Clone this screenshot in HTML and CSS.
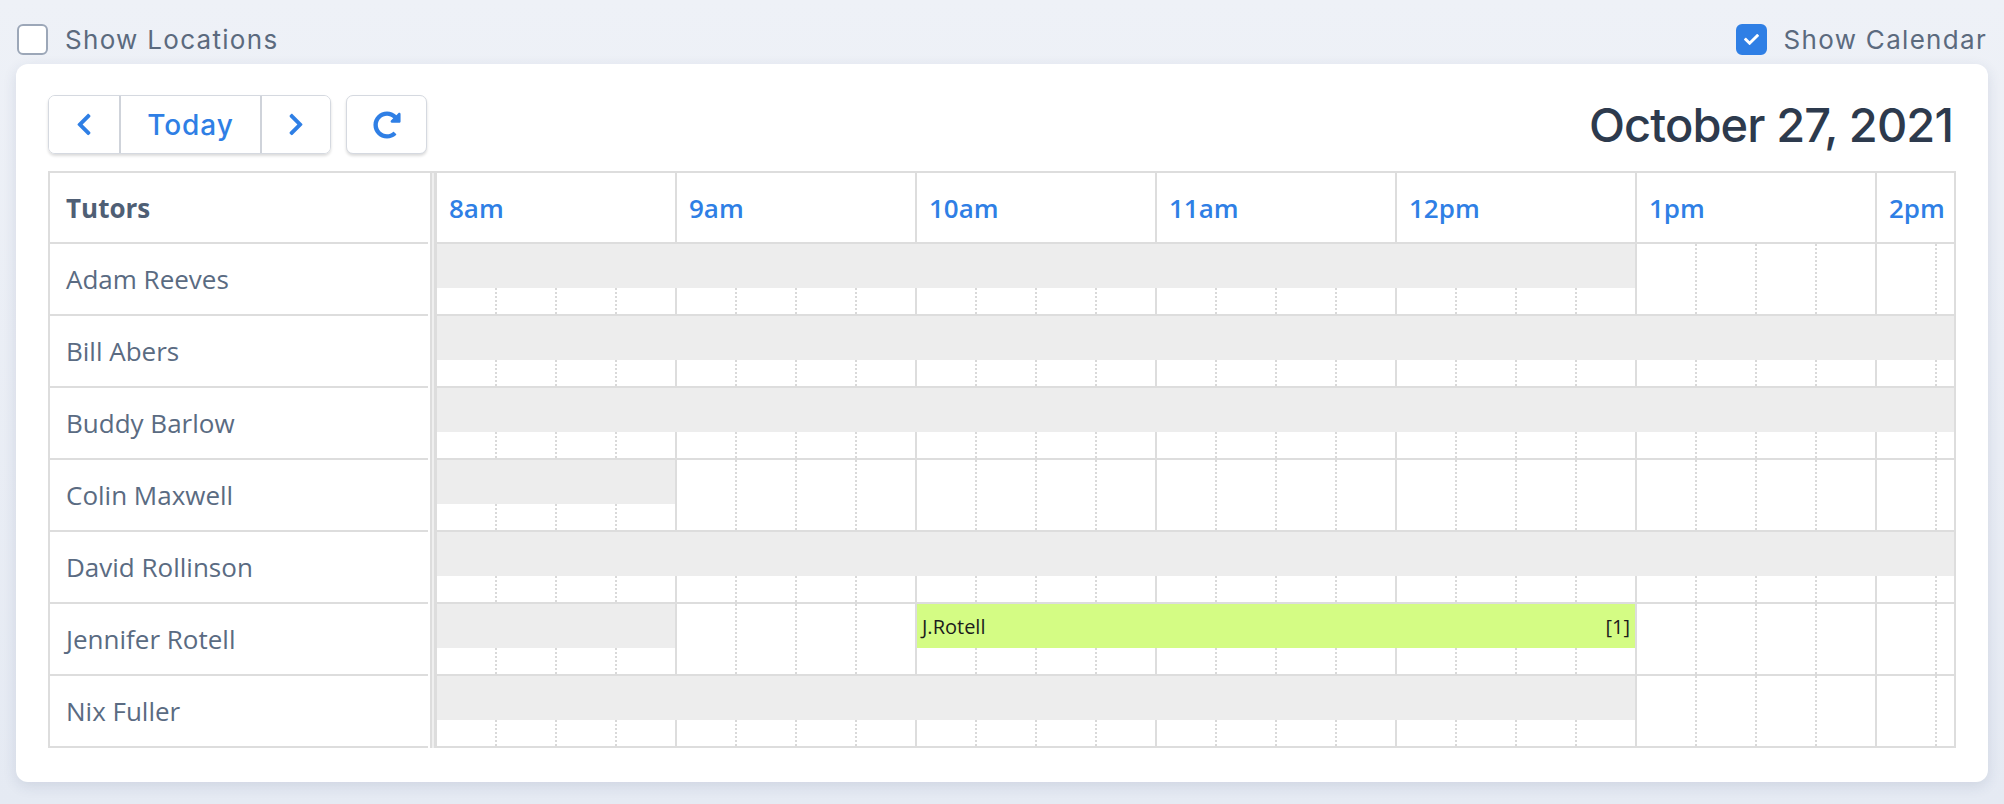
FILE: index.html
```html
<!DOCTYPE html>
<html lang="en">
<head>
    <meta charset="UTF-8">
    <meta name="viewport" content="width=device-width, initial-scale=1.0">
    <title>Tutor Schedule</title>
    <link rel="stylesheet" href="styles.css">
</head>
<body>
    <div class="topbar">
        <label class="toggle">
            <span class="box"></span>
            Show Locations
        </label>
        <label class="toggle">
            <span class="box checked">
                <svg viewBox="0 0 512 512"><path d="M173.9 439.4l-166.4-166.4c-10-10-10-26.2 0-36.2l36.2-36.2c10-10 26.2-10 36.2 0L192 312.7 432.1 72.6c10-10 26.2-10 36.2 0l36.2 36.2c10 10 10 26.2 0 36.2l-294.4 294.4c-10 10-26.2 10-36.2 0z"/></svg>
            </span>
            Show Calendar
        </label>
    </div>

    <div class="card">
        <div class="toolbar">
            <div class="btn-group">
                <button class="btn btn-icon" title="Previous day">
                    <svg class="chevron" viewBox="0 0 320 512"><path d="M34.5 239L228.9 44.7c9.4-9.4 24.6-9.4 33.9 0l22.7 22.7c9.4 9.4 9.4 24.5 0 33.9L131.5 256l154 154.8c9.3 9.4 9.3 24.5 0 33.9l-22.7 22.7c-9.4 9.4-24.6 9.4-33.9 0L34.5 273c-9.4-9.4-9.4-24.6 0-34z"/></svg>
                </button>
                <button class="btn btn-today">Today</button>
                <button class="btn btn-icon" title="Next day">
                    <svg class="chevron" viewBox="0 0 320 512"><path d="M285.5 273L91.1 467.3c-9.4 9.4-24.6 9.4-33.9 0l-22.7-22.7c-9.4-9.4-9.4-24.5 0-33.9L188.5 256 34.5 101.3c-9.3-9.4-9.3-24.5 0-33.9l22.7-22.7c9.4-9.4 24.6-9.4 33.9 0L285.5 239c9.4 9.4 9.4 24.6 0 34z"/></svg>
                </button>
            </div>
            <button class="btn btn-refresh" title="Refresh">
                <svg viewBox="0 0 512 512"><path d="M256.5 8c66.3.1 126.4 26.2 170.9 68.7l35.7-35.7C478.1 25.9 504 36.6 504 57.9V192c0 13.3-10.7 24-24 24H345.9c-21.4 0-32.1-25.9-17-41l41.8-41.8c-30.9-28.9-70.8-44.9-113.2-45.300-92.4-.8-170.3 74-169.5 169.4C88.8 348 162.2 424 256 424c41.1 0 80-14.7 110.6-41.6 4.7-4.2 11.9-3.9 16.4.6l39.7 39.7c4.9 4.9 4.6 12.8-.5 17.4C378.2 479.8 319.9 504 256 504 119 504 8 393 8 256 8 119.2 119.6 7.8 256.5 8z"/></svg>
            </button>
            <h2 class="date">October 27, 2021</h2>
        </div>

        <div class="schedule">
            <div class="tutors" id="tutors">
                <div class="cell cell-head">Tutors</div>
            </div>
            <div class="divider"></div>
            <div class="timeline" id="timeline">
                <div class="hours" id="hours"></div>
            </div>
        </div>
    </div>

    <script>
        const hours = ['8am', '9am', '10am', '11am', '12pm', '1pm', '2pm'];
        const hourWidth = 240;

        // busy = hours blocked from the start of the day (null = whole day)
        const tutors = [
            { name: 'Adam Reeves', busy: 5 },
            { name: 'Bill Abers', busy: null },
            { name: 'Buddy Barlow', busy: null },
            { name: 'Colin Maxwell', busy: 1 },
            { name: 'David Rollinson', busy: null },
            { name: 'Jennifer Rotell', busy: 1, events: [{ start: 2, end: 5, label: 'J.Rotell', count: 1 }] },
            { name: 'Nix Fuller', busy: 5 }
        ];

        const hoursRow = document.getElementById('hours');
        hours.forEach(h => {
            const cell = document.createElement('div');
            cell.className = 'hour';
            cell.textContent = h;
            hoursRow.appendChild(cell);
        });

        const tutorCol = document.getElementById('tutors');
        const timeline = document.getElementById('timeline');

        tutors.forEach(t => {
            const name = document.createElement('div');
            name.className = 'cell';
            name.textContent = t.name;
            tutorCol.appendChild(name);

            const lane = document.createElement('div');
            lane.className = 'lane';
            for (let i = 0; i < hours.length * 4; i++) {
                const slot = document.createElement('div');
                slot.className = 'slot';
                lane.appendChild(slot);
            }

            const block = document.createElement('div');
            block.className = 'block';
            block.style.width = t.busy === null ? '100%' : (t.busy * hourWidth - 2) + 'px';
            lane.appendChild(block);

            (t.events || []).forEach(ev => {
                const el = document.createElement('div');
                el.className = 'event';
                el.style.left = (ev.start * hourWidth) + 'px';
                el.style.width = ((ev.end - ev.start) * hourWidth - 2) + 'px';
                el.innerHTML = `<span>${ev.label}</span><span>[${ev.count}]</span>`;
                lane.appendChild(el);
            });

            timeline.appendChild(lane);
        });
    </script>
</body>
</html>
```

FILE: styles.css
```css
body {
    margin: 0;
    padding: 0;
    min-height: 804px;
    background: linear-gradient(#eef1f7, #e5eaf3);
    font-family: Inter, "Open Sans", sans-serif;
    color: #5b6a7e;
}

.topbar {
    display: flex;
    justify-content: space-between;
    align-items: center;
    padding: 24px 17px 9px;
}

.toggle {
    display: flex;
    align-items: center;
    gap: 17px;
    height: 31px;
    font-size: 26px;
    letter-spacing: 1.3px;
    color: #5b6a7e;
}

.box {
    width: 31px;
    height: 31px;
    box-sizing: border-box;
    border: 2px solid #9ca7b8;
    border-radius: 6px;
    background: #fff;
    display: flex;
    align-items: center;
    justify-content: center;
}

.box.checked {
    background: #2f7fe5;
    border-color: #2f7fe5;
}

.box svg {
    width: 15px;
    height: 15px;
    fill: #fff;
}

.card {
    margin: 0 16px;
    padding: 31px 32px 34px 32px;
    background: #fff;
    border-radius: 12px;
    box-shadow: 0 4px 14px rgba(40, 60, 100, 0.12);
}

.toolbar {
    display: flex;
    align-items: center;
    gap: 15px;
    margin-bottom: 17px;
}

.btn-group {
    display: flex;
    border: 1px solid #d5d9e0;
    border-radius: 7px;
    box-shadow: 0 2px 3px rgba(0, 0, 0, 0.14);
    overflow: hidden;
}

.btn {
    height: 59px;
    box-sizing: border-box;
    background: #fff;
    border: none;
    padding: 0;
    font-family: inherit;
    color: #2f7fe5;
    cursor: pointer;
    display: flex;
    align-items: center;
    justify-content: center;
}

.btn-group .btn {
    height: 57px;
}

.btn-group .btn + .btn {
    border-left: 2px solid #cfd3da;
}

.btn-icon {
    width: 70px;
}

.btn-today {
    width: 141px;
    font-size: 28px;
    font-weight: 500;
    letter-spacing: 0.9px;
}

.chevron {
    width: 16px;
    height: 25px;
    fill: #2f7fe5;
}

.btn-refresh {
    width: 81px;
    border: 1px solid #d5d9e0;
    border-radius: 7px;
    box-shadow: 0 2px 3px rgba(0, 0, 0, 0.14);
}

.btn-refresh svg {
    width: 28px;
    height: 28px;
    fill: #2f7fe5;
}

.date {
    margin: 0 3px 0 auto;
    font-size: 47px;
    font-weight: 500;
    color: #2d3a4d;
    letter-spacing: -0.9px;
}

.schedule {
    display: flex;
    border-top: 2px solid #dddddd;
    border-left: 2px solid #dddddd;
    font-family: "Open Sans", sans-serif;
}

.tutors {
    width: 378px;
    flex: none;
}

.cell {
    height: 70px;
    border-bottom: 2px solid #dddddd;
    padding-left: 16px;
    display: flex;
    align-items: center;
    font-size: 26px;
    color: #5a6b82;
}

.cell-head {
    height: 69px;
    font-weight: 700;
    color: #4f5f75;
}

.divider {
    width: 7px;
    flex: none;
    margin-left: 2px;
    box-sizing: border-box;
    border-left: 2px solid #dddddd;
    border-right: 3px solid #dddddd;
    background: #efefef;
}

.timeline {
    flex: 1;
    overflow: hidden;
    border-right: 2px solid #dddddd;
}

.hours {
    display: flex;
    height: 69px;
    border-bottom: 2px solid #dddddd;
}

.hour {
    flex: none;
    width: 240px;
    box-sizing: border-box;
    border-right: 2px solid #dddddd;
    padding-left: 12px;
    display: flex;
    align-items: center;
    font-size: 26px;
    font-weight: 600;
    color: #2f7fe5;
}

.lane {
    position: relative;
    display: flex;
    height: 70px;
    border-bottom: 2px solid #dddddd;
}

.slot {
    flex: none;
    width: 60px;
    box-sizing: border-box;
    border-right: 2px dotted #d9d9d9;
}

.slot:nth-child(4n) {
    border-right: 2px solid #dddddd;
}

.block {
    position: absolute;
    top: 0;
    left: 0;
    height: 44px;
    background: #ededed;
}

.event {
    position: absolute;
    top: 0;
    height: 44px;
    box-sizing: border-box;
    padding: 0 5px;
    background: #d4fc84;
    display: flex;
    justify-content: space-between;
    align-items: center;
    font-size: 20px;
    color: #1c1c1c;
}
```
